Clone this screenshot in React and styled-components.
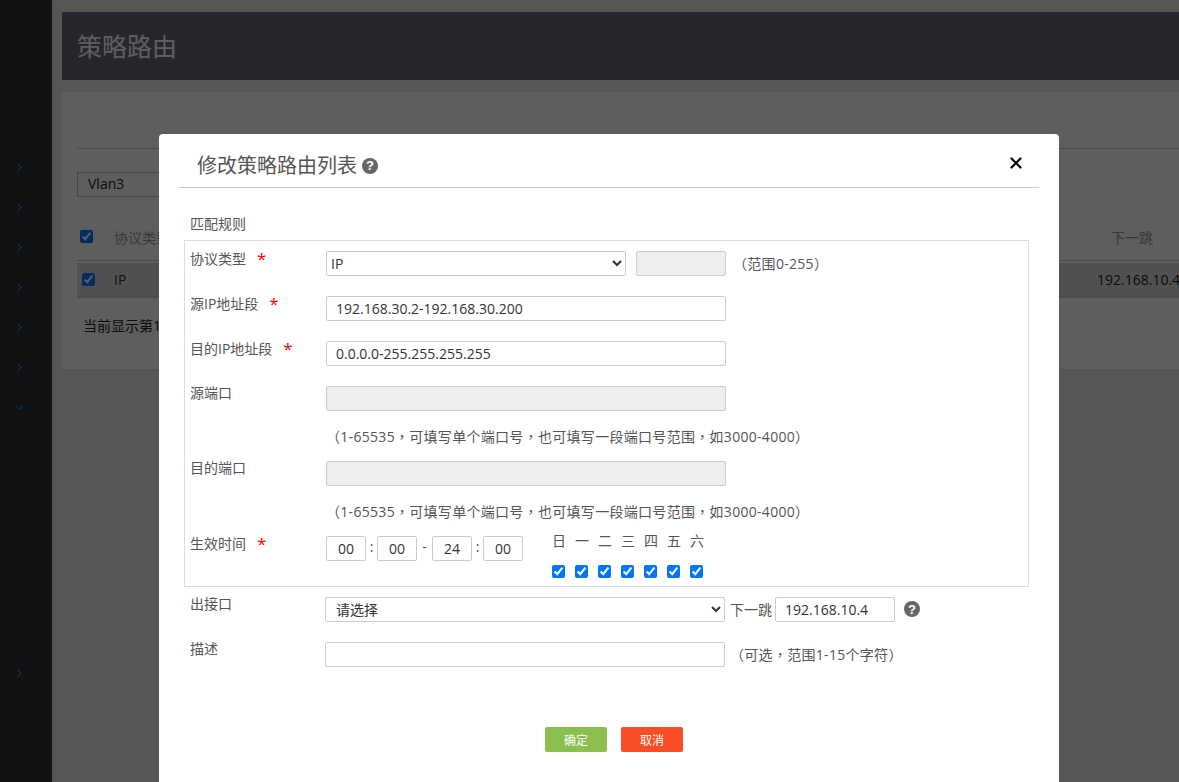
import React from "react";
import styled, { createGlobalStyle } from "styled-components";
import { ChevronRight, ChevronDown, X } from "lucide-react";

const GlobalStyle = createGlobalStyle`
  html, body {
    margin: 0;
    height: 100%;
    overflow: hidden;
    background: #e8e8e8;
    font-family: "Open Sans", "Noto Sans CJK SC", sans-serif;
    font-size: 14px;
    color: #444;
  }
  * {
    box-sizing: border-box;
  }
`;

const Page = styled.div`
  display: flex;
  width: 1179px;
  height: 782px;
  overflow: hidden;
`;

const Sidebar = styled.nav`
  flex: 0 0 52px;
  padding-top: 147px;
  background: #2e3338;
`;

const NavItem = styled.div`
  display: flex;
  align-items: center;
  height: 40px;
  padding-left: 13px;
  margin-top: ${(p) => p.$offset || 0}px;
  color: #2a85e0;
`;

const Main = styled.main`
  flex: 1;
  min-width: 0;
  padding: 12px 0 0 10px;
`;

const PageHeader = styled.header`
  display: flex;
  align-items: center;
  height: 68px;
  padding: 0 0 2px 15px;
  background: #696977;
  color: #fff;
  font-size: 25px;
`;

const Panel = styled.section`
  height: 278px;
  margin-top: 12px;
  padding: 56px 0 0 15px;
  background: #fff;
  overflow: hidden;
  border-bottom: 1px solid #ddd;
`;

const PanelRule = styled.div`
  height: 1px;
  background: #ccc;
`;

const VlanSelect = styled.div`
  display: flex;
  align-items: center;
  width: 140px;
  height: 25px;
  margin-top: 23px;
  padding: 0 0 2px 10px;
  border: 1px solid #bbb;
  color: #222;
`;

const TableRow = styled.div`
  display: grid;
  grid-template-columns: ${(p) => (p.$head ? 34 : 32)}px 983px 70px;
  align-items: center;
  width: 1102px;
  height: ${(p) => (p.$head ? 41 : 33)}px;
  margin-top: ${(p) => (p.$head ? 22 : 3)}px;
  padding: ${(p) => (p.$head ? "0 0 6px 3px" : "0 0 0 5px")};
  background: ${(p) => (p.$head ? "transparent" : "#dcdcdc")};
  color: ${(p) => (p.$head ? "#999" : "#222")};
  box-shadow: 0 ${(p) => (p.$head ? 1 : 2)}px 0 #ccc;
`;

const NextHopCell = styled.span`
  justify-self: ${(p) => (p.$head ? "center" : "start")};
  white-space: nowrap;
`;

const Summary = styled.p`
  margin: 19px 0 0 6px;
  color: #222;
`;

const Overlay = styled.div`
  position: fixed;
  inset: 0;
  display: flex;
  padding: 134px 0 0 159px;
  background: rgba(0, 0, 0, 0.63);
  overflow: hidden;
`;

const Modal = styled.div`
  flex: 0 0 900px;
  height: 700px;
  border-radius: 4px;
  background: #fff;
`;

const ModalHeader = styled.div`
  display: flex;
  align-items: center;
  height: 54px;
  margin: 0 20px;
  padding: 8px 14px 0 18px;
  border-bottom: 1px solid #ccc;
`;

const ModalTitle = styled.h2`
  margin: 0 5px 0 0;
  font-size: 20px;
  font-weight: 400;
  color: #555;
`;

const HelpIcon = styled.span`
  display: inline-flex;
  align-items: center;
  justify-content: center;
  flex: none;
  width: 16px;
  height: 16px;
  margin-left: ${(p) => p.$gap || 0}px;
  margin-top: ${(p) => p.$top || 2}px;
  border-radius: 50%;
  background: #666;
  color: #fff;
  font-family: "Liberation Sans", sans-serif;
  font-size: 13px;
  font-weight: 700;
  line-height: 1;
`;

const CloseButton = styled.button`
  display: flex;
  margin: -4px 0 0 auto;
  padding: 0;
  border: 0;
  background: none;
  color: #000;
`;

const ModalBody = styled.div`
  padding: 26px 30px 0 25px;
`;

const SectionTitle = styled.div`
  padding-left: 6px;
  height: 26px;
  line-height: 20px;
  color: #555;
`;

const RuleBox = styled.div`
  height: 347px;
  padding: 10px 5px 0;
  border: 1px solid #ddd;
`;

const Row = styled.div`
  display: flex;
  align-items: flex-start;
  height: 25px;
  margin-bottom: ${(p) => (p.$hinted ? 0 : 20)}px;
`;

const Label = styled.label`
  display: flex;
  flex: 0 0 ${(p) => p.$width || 136}px;
  height: 18px;
  margin-top: ${(p) => (p.$plain ? -2 : -1)}px;
  line-height: 18px;
  color: #555;
  white-space: nowrap;
`;

const Star = styled.span`
  margin-left: 11px;
  color: #f00;
  font-size: 17px;
`;

const Input = styled.input`
  width: ${(p) => p.$width || 400}px;
  height: 25px;
  margin-left: ${(p) => p.$gap || 0}px;
  padding: 0 9px;
  border: 1px solid #ccc;
  border-radius: 2px;
  outline: none;
  background: ${(p) => (p.disabled ? "#eee" : "#fff")};
  color: #333;
  font: inherit;
  flex: none;
`;

const Select = styled.select`
  width: ${(p) => p.$width || 400}px;
  height: 25px;
  padding: 0 ${(p) => (p.$tight ? 0 : 6)}px;
  border: 1px solid #ccc;
  border-radius: 2px;
  background: #fff;
  color: #333;
  font: inherit;
  flex: none;
`;

/* TC font: its full-width punctuation sits centred, as in the reference */
const Note = styled.span`
  margin-left: ${(p) => p.$gap || 0}px;
  line-height: 25px;
  color: #555;
  font-family: "Open Sans", "Noto Sans CJK TC", sans-serif;
  letter-spacing: ${(p) => (p.$plain ? 0 : 0.3)}px;
  white-space: nowrap;
`;

const Hint = styled.div`
  height: 50px;
  padding: 15px 0 0 136px;
  line-height: 22px;
  color: #555;
  font-family: "Open Sans", "Noto Sans CJK TC", sans-serif;
  letter-spacing: 0.3px;
  white-space: nowrap;
`;

const TimeSep = styled.span`
  flex: 0 0 ${(p) => p.$width}px;
  text-align: center;
  line-height: 22px;
  color: #555;
`;

const TimeInput = styled(Input)`
  padding: 0;
  text-align: center;
`;

const WeekGrid = styled.div`
  display: grid;
  grid-template-columns: repeat(7, 23px);
  grid-template-rows: 28px 35px;
  justify-items: start;
  align-items: center;
  margin: -10px 0 0 29px;
  color: #555;
`;

const DayCheck = styled.input`
  width: 13px;
  height: 13px;
  margin: 0;
`;

const TableCheck = styled.input`
  width: 13px;
  height: 13px;
  margin: 0;
`;

const PlainRows = styled.div`
  padding: 10px 0 0 6px;
`;

const Footer = styled.div`
  display: flex;
  justify-content: center;
  gap: 14px;
  padding-top: 40px;
  margin-left: 15px;
`;

const ActionButton = styled.button`
  width: 62px;
  height: 25px;
  padding: 0;
  border: 0;
  border-radius: 2px;
  background: ${(p) => (p.$cancel ? "#f94d26" : "#8bc04f")};
  color: #fff;
  font: inherit;
  font-size: 12px;
`;

const weekDays = ["日", "一", "二", "三", "四", "五", "六"];
const portHint = "（1-65535，可填写单个端口号，也可填写一段端口号范围，如3000-4000）";

const App = () => {
  return (
    <>
      <GlobalStyle />
      <Page>
        <Sidebar>
          {[0, 1, 2, 3, 4, 5].map((i) => (
            <NavItem key={i}>
              <ChevronRight size={13} />
            </NavItem>
          ))}
          <NavItem>
            <ChevronDown size={13} />
          </NavItem>
          <NavItem $offset={226}>
            <ChevronRight size={13} />
          </NavItem>
        </Sidebar>
        <Main>
          <PageHeader>策略路由</PageHeader>
          <Panel>
            <PanelRule />
            <VlanSelect>Vlan3</VlanSelect>
            <TableRow $head>
              <TableCheck type="checkbox" defaultChecked />
              <span>协议类型</span>
              <NextHopCell $head>下一跳</NextHopCell>
            </TableRow>
            <TableRow>
              <TableCheck type="checkbox" defaultChecked />
              <span>IP</span>
              <NextHopCell>192.168.10.4</NextHopCell>
            </TableRow>
            <Summary>当前显示第1</Summary>
          </Panel>
        </Main>
      </Page>

      <Overlay>
        <Modal>
          <ModalHeader>
            <ModalTitle>修改策略路由列表</ModalTitle>
            <HelpIcon>?</HelpIcon>
            <CloseButton>
              <X size={18} strokeWidth={3} />
            </CloseButton>
          </ModalHeader>
          <ModalBody>
            <SectionTitle>匹配规则</SectionTitle>
            <RuleBox>
              <Row>
                <Label>
                  协议类型<Star>*</Star>
                </Label>
                <Select $width={300} $tight defaultValue="IP">
                  <option>IP</option>
                </Select>
                <Input disabled $width={90} $gap={10} />
                <Note $gap={7}>（范围0-255）</Note>
              </Row>
              <Row>
                <Label>
                  源IP地址段<Star>*</Star>
                </Label>
                <Input readOnly defaultValue="192.168.30.2-192.168.30.200" />
              </Row>
              <Row>
                <Label>
                  目的IP地址段<Star>*</Star>
                </Label>
                <Input readOnly defaultValue="0.0.0.0-255.255.255.255" />
              </Row>
              <Row $hinted>
                <Label $plain>源端口</Label>
                <Input disabled />
              </Row>
              <Hint>{portHint}</Hint>
              <Row $hinted>
                <Label $plain>目的端口</Label>
                <Input disabled />
              </Row>
              <Hint>{portHint}</Hint>
              <Row>
                <Label>
                  生效时间<Star>*</Star>
                </Label>
                <TimeInput readOnly $width={40} defaultValue="00" />
                <TimeSep $width={11}>:</TimeSep>
                <TimeInput readOnly $width={40} defaultValue="00" />
                <TimeSep $width={15}>-</TimeSep>
                <TimeInput readOnly $width={40} defaultValue="24" />
                <TimeSep $width={11}>:</TimeSep>
                <TimeInput readOnly $width={40} defaultValue="00" />
                <WeekGrid>
                  {weekDays.map((day) => (
                    <span key={day}>{day}</span>
                  ))}
                  {weekDays.map((day) => (
                    <DayCheck key={day} type="checkbox" defaultChecked />
                  ))}
                </WeekGrid>
              </Row>
            </RuleBox>
            <PlainRows>
              <Row>
                <Label $plain $width={135}>出接口</Label>
                <Select defaultValue="">
                  <option value="">请选择</option>
                </Select>
                <Note $plain $gap={5}>下一跳</Note>
                <Input readOnly $width={120} $gap={3} defaultValue="192.168.10.4" />
                <HelpIcon $gap={9} $top={4}>?</HelpIcon>
              </Row>
              <Row>
                <Label $plain $width={135}>描述</Label>
                <Input />
                <Note $gap={5}>（可选，范围1-15个字符）</Note>
              </Row>
            </PlainRows>
            <Footer>
              <ActionButton>确定</ActionButton>
              <ActionButton $cancel>取消</ActionButton>
            </Footer>
          </ModalBody>
        </Modal>
      </Overlay>
    </>
  );
};

export default App;
